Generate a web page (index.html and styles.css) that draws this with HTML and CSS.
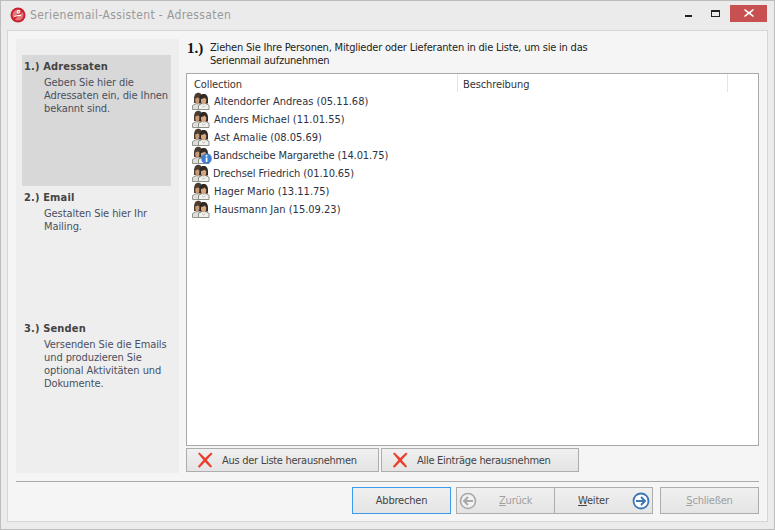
FILE: index.html
```html
<!DOCTYPE html>
<html lang="de">
<head>
<meta charset="utf-8">
<title>Serienemail-Assistent - Adressaten</title>
<link rel="stylesheet" href="styles.css">
</head>
<body>
<svg class="defs" width="0" height="0">
  <defs>
    <symbol id="person" viewBox="0 0 18 18">
      <path d="M.5 17.500v-4l3.500-1.800h3l2 1v4.800z" fill="#dededa" stroke="#8a8a86" stroke-width=".9"/>
      <path d="M2 7C2 2.800 3.800 .8 6.300 .8S10.500 2.800 10.500 7v4H2z" fill="#4a3c30"/>
      <path d="M6.500 17.500v-4.200l3.500-1.800h3.500l3.500 1.800v4.200z" fill="#f1f1ee" stroke="#85857f" stroke-width=".9"/>
      <path d="M7.500 8c0-4.200 1.600-6 4.200-6s4.300 1.900 4.300 6v3.500H7.500z" fill="#2f2925"/>
      <path d="M9 7c1.500-.2 3-.7 3.700-1.500.3.700.8 1.200 1.500 1.500v2c0 1.700-1.200 3.600-2.600 3.600S9 10.800 9 9z" fill="#d9a77f"/>
      <path d="M3.300 6.400c1-.1 2-.6 2.700-1.200.3.500.7.900 1.300 1.100v2.600c-.2 1.500-1.100 2.800-2.100 2.800S3.300 10.200 3.300 8.600z" fill="#c99a76"/>
      <path d="M10 13.700l1.700 1.300 1.700-1.300" fill="none" stroke="#b0b0aa" stroke-width=".8"/>
    </symbol>
    <symbol id="cross" viewBox="0 0 16 16">
      <path d="M1 1.500L2.500.5 8.200 6 14 .5l1.500 1.200L9.800 8l5.400 6.600-1.700 1L8 9.900 2.500 15.800.8 14.400 6.400 8z" fill="#e8402c"/>
    </symbol>
  </defs>
</svg>
<div class="window">
  <header class="titlebar">
    <svg class="app-icon" width="16" height="16" viewBox="0 0 16 16">
      <circle cx="8" cy="8" r="7.500" fill="#c8202c"/>
      <circle cx="8" cy="8" r="5.500" fill="#e2787c"/>
      <path d="M3.500 12.500L12.500 3.500" stroke="#c8202c" stroke-width="1.800"/>
      <path d="M4.500 9.500c2-.5 4-1.500 6.500-1M8.500 3.500a1.300 1.300 0 1 1 0 2.600 1.300 1.300 0 0 1 0-2.600z" stroke="#fff" stroke-width="1.100" fill="none"/>
    </svg>
    <span class="title">Serienemail-Assistent - Adressaten</span>
    <div class="controls">
      <span class="min"></span>
      <span class="max"></span>
      <span class="close">
        <svg width="10" height="8" viewBox="0 0 10 8"><path d="M1 0l4 3 4-3 1 1-3.500 3L10 7l-1 1-4-3-4 3-1-1 3.500-3L0 1z" fill="#fff"/></svg>
      </span>
    </div>
  </header>
  <main class="client">
    <div class="top">
      <nav class="steps">
        <section class="step step-active">
          <h2>1.) Adressaten</h2>
          <p>Geben Sie hier die Adressaten ein, die Ihnen bekannt sind.</p>
        </section>
        <section class="step step-2">
          <h2>2.) Email</h2>
          <p>Gestalten Sie hier Ihr Mailing.</p>
        </section>
        <section class="step step-3">
          <h2>3.) Senden</h2>
          <p>Versenden Sie die Emails und produzieren Sie optional Aktivitäten und Dokumente.</p>
        </section>
      </nav>
      <div class="content">
        <div class="intro">
          <strong>1.)</strong>
          <p>Ziehen Sie Ihre Personen, Mitglieder oder Lieferanten in die Liste, um sie in das Serienmail aufzunehmen</p>
        </div>
        <div class="list">
          <div class="list-head">
            <span class="col-a">Collection</span>
            <span class="col-b">Beschreibung</span>
          </div>
          <ul class="rows">
            <li><svg class="person"><use href="#person"/></svg>Altendorfer Andreas (05.11.68)</li>
            <li><svg class="person"><use href="#person"/></svg>Anders Michael (11.01.55)</li>
            <li><svg class="person"><use href="#person"/></svg>Ast Amalie (08.05.69)</li>
            <li class="info"><svg class="person"><use href="#person"/></svg><svg class="badge" width="11" height="11" viewBox="0 0 11 11"><circle cx="5.500" cy="5.500" r="5.300" fill="#3f7fd0"/><rect x="4.700" y="2" width="1.700" height="1.600" fill="#fff"/><rect x="4.700" y="4.500" width="1.700" height="4.500" fill="#fff"/></svg><span class="tight">Bandscheibe Margarethe (14.01.75)</span></li>
            <li><svg class="person"><use href="#person"/></svg><span class="tight">Drechsel Friedrich (01.10.65)</span></li>
            <li><svg class="person"><use href="#person"/></svg>Hager Mario (13.11.75)</li>
            <li><svg class="person"><use href="#person"/></svg>Hausmann Jan (15.09.23)</li>
          </ul>
        </div>
        <div class="list-actions">
          <button class="btn remove remove-one" type="button"><svg width="16" height="16"><use href="#cross"/></svg><span>Aus der Liste herausnehmen</span></button>
          <button class="btn remove remove-all" type="button"><svg width="16" height="16"><use href="#cross"/></svg><span>Alle Einträge herausnehmen</span></button>
        </div>
      </div>
    </div>
    <footer class="footer">
      <button class="btn cancel" type="button">Abbrechen</button>
      <div class="nav-group">
        <button class="btn back" type="button" disabled>
          <svg width="18" height="18" viewBox="0 0 18 18"><circle cx="9" cy="9" r="7.500" fill="#f2f2f2" stroke="#a8a8a8" stroke-width="1.600"/><path d="M14 9H6M9 5L5 9l4 4" fill="none" stroke="#a8a8a8" stroke-width="2"/></svg>
          <span><u>Z</u>urück</span>
        </button>
        <button class="btn next" type="button">
          <span><u>W</u>eiter</span>
          <svg width="18" height="18" viewBox="0 0 18 18"><circle cx="9" cy="9" r="7.500" fill="#fff" stroke="#3c76b4" stroke-width="1.800"/><path d="M4 9h8M9 5l4 4-4 4" fill="none" stroke="#3c76b4" stroke-width="2"/></svg>
        </button>
      </div>
      <button class="btn finish" type="button" disabled><span><u>S</u>chließen</span></button>
    </footer>
  </main>
</div>
</body>
</html>
```

FILE: styles.css
```css
* { box-sizing: border-box; }
html, body { margin: 0; padding: 0; }
body {
  width: 775px;
  height: 530px;
  overflow: hidden;
  font-family: "DejaVu Sans Condensed", "DejaVu Sans", sans-serif;
  font-size: 11px;
  color: #333;
}
.defs { display: block; height: 0; }
.window {
  width: 775px;
  height: 530px;
  display: flex;
  flex-direction: column;
  background: #ebebeb;
  border: 1px solid #bdbdbd;
  padding: 0 6px 7px;
}
.titlebar {
  height: 29px;
  flex: none;
  display: flex;
  align-items: center;
  padding: 0 0 0 3px;
}
.app-icon { flex: none; margin-top: -1px; }
.title {
  margin-left: 4px;
  font-size: 12px;
  letter-spacing: .38px;
  color: #999;
  margin-top: -1px;
}
.controls {
  margin-left: auto;
  margin-right: 1px;
  margin-top: -5px;
  display: flex;
  align-items: center;
}
.min { width: 7px; height: 2px; background: #222; margin-top: 5px; margin-right: 19px; }
.max { width: 9px; height: 7px; border: 1px solid #222; border-top-width: 2px; margin-right: 10px; }
.close {
  width: 37px;
  height: 17px;
  background: #c75050;
  display: flex;
  align-items: center;
  justify-content: center;
}
.client {
  flex: 1;
  min-height: 0;
  background: #f5f5f5;
  border: 1px solid #d6d6d6;
  padding: 8px 8px 7px 8px;
  display: flex;
  flex-direction: column;
}
.top {
  height: 434px;
  flex: none;
  display: flex;
  gap: 7px;
}
.steps {
  width: 163px;
  flex: none;
  background: #eeeeee;
  padding: 16px 8px 0 6px;
  display: flex;
  flex-direction: column;
}
.step { padding: 5px 0 0 2px; }
.step h2 {
  margin: 0 0 2px;
  font-size: 11px;
  line-height: 14px;
  font-weight: 700;
  letter-spacing: .15px;
  color: #444;
}
.step p {
  margin: 0;
  padding: 0 0 0 20px;
  font-size: 11px;
  line-height: 13px;
  letter-spacing: -.08px;
  color: #4a4f60;
}
.step-active { background: #d8d8d8; height: 131px; }
.step-2 { height: 131px; }
.step-3 { height: 130px; }
.content {
  flex: 1;
  min-width: 0;
  display: flex;
  flex-direction: column;
}
.intro {
  height: 34px;
  flex: none;
  display: flex;
  align-items: flex-start;
}
.intro strong {
  width: 24px;
  flex: none;
  padding-left: 1px;
  font-family: "Liberation Serif", serif;
  font-size: 15px;
  line-height: 18px;
  font-weight: 700;
  color: #111;
}
.intro p {
  margin: 2px 0 0;
  width: 420px;
  font-size: 11px;
  line-height: 13px;
  letter-spacing: -.2px;
  color: #222;
}
.list {
  height: 373px;
  flex: none;
  background: #fff;
  border: 1px solid #a9a9a9;
}
.list-head {
  height: 18px;
  display: flex;
  line-height: 21px;
  letter-spacing: -.1px;
  color: #333;
}
.list-head span { border-right: 1px solid #e4e4e4; padding-left: 7px; }
.col-a { width: 271px; }
.col-b { width: 270px; padding-left: 5px !important; }
.rows { list-style: none; margin: 0; padding: 0; }
.rows li {
  height: 18px;
  display: flex;
  align-items: center;
  padding-left: 5px;
  color: #2e3242;
  position: relative;
}
.tight { letter-spacing: -.1px; margin-left: -1px; }
.person { width: 18px; height: 18px; flex: none; margin-right: 4px; }
.badge { position: absolute; left: 14px; top: 7px; }
.list-actions {
  display: flex;
  gap: 2px;
  margin-top: 2px;
}
.btn {
  font: inherit;
  color: #444;
  height: 24px;
  background: linear-gradient(#f0f0f0, #e4e4e4);
  border: 1px solid #adadad;
  border-radius: 0;
  padding: 0;
  display: flex;
  align-items: center;
}
.btn:disabled { color: #a0a0a0; }
.remove { padding-left: 10px; letter-spacing: -.28px; }
.remove span { margin-left: 9px; }
.remove-one { width: 193px; }
.remove-all { width: 198px; }
.footer {
  margin-top: 8px;
  border-top: 1px solid #a9a9a9;
  padding-top: 5px;
  display: flex;
  align-items: flex-start;
}
.footer .btn { height: 27px; letter-spacing: -.2px; }
.cancel {
  width: 99px;
  margin-left: 336px;
  justify-content: center;
  border-color: #3c9bea !important;
}
.nav-group { display: flex; margin-left: 5px; }
.back { width: 99px; padding-left: 2px; justify-content: flex-start; }
.back span { margin-left: 22px; }
.next { width: 98px; border-left: 0; padding-right: 2px; padding-left: 23px; justify-content: space-between; }
.finish { width: 99px; margin-left: 7px; justify-content: center; }
```
